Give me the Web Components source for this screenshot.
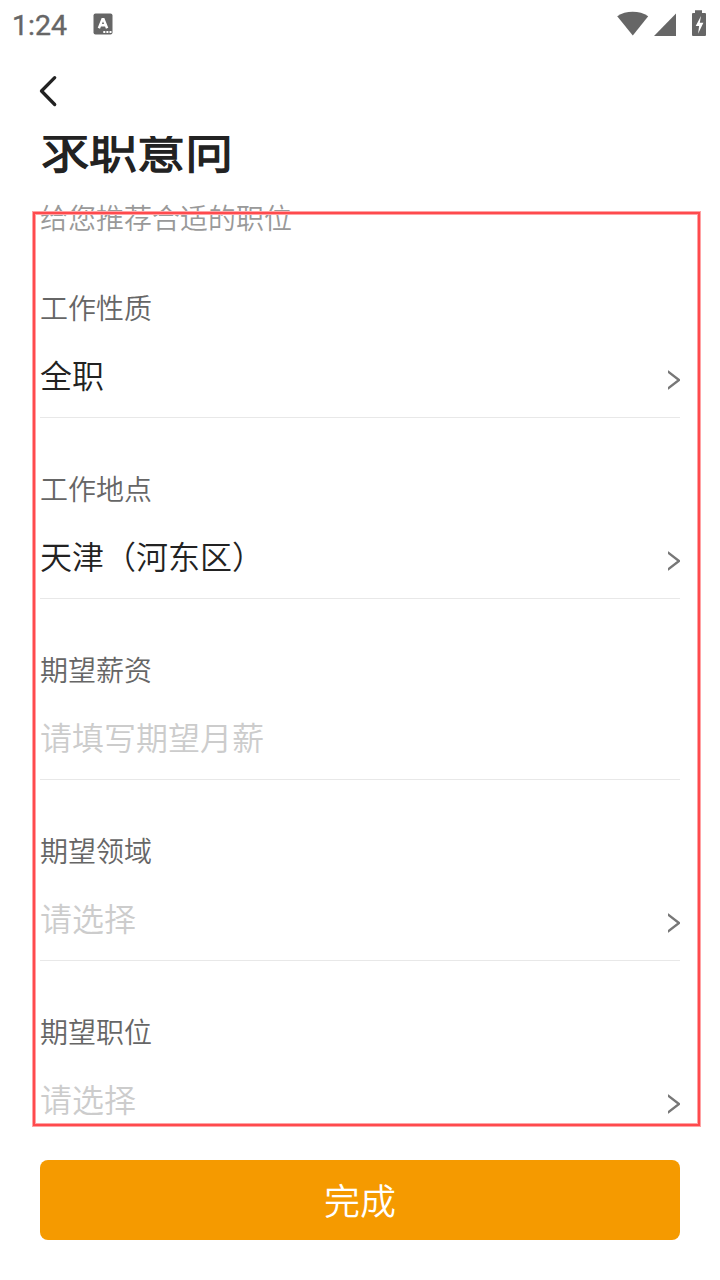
<!DOCTYPE html>
<html lang="zh-CN">
<head>
<meta charset="utf-8">
<title>求职意向</title>
<style>
    body {
        margin: 0;
        background: #fff;
        font-family: "Noto Sans CJK SC", sans-serif;
        font-weight: 350;
    }
</style>
</head>
<body>
<job-intention-page>
    <status-bar slot="status" time="1:24"></status-bar>
    <nav-bar slot="nav"></nav-bar>
    <page-heading heading="求职意向">给您推荐合适的职位</page-heading>
    <form-row label="工作性质" value="全职" arrow></form-row>
    <form-row label="工作地点" value="天津（河东区）" arrow></form-row>
    <form-row label="期望薪资" placeholder="请填写期望月薪"></form-row>
    <form-row label="期望领域" placeholder="请选择" arrow></form-row>
    <form-row label="期望职位" placeholder="请选择" arrow></form-row>
    <submit-button slot="footer">完成</submit-button>
</job-intention-page>

<script>
function attach(element, html) {
    const template = document.createElement("template");
    template.innerHTML = html;
    const root = element.attachShadow({ mode: "open" });
    root.appendChild(template.content.cloneNode(true));
    return root;
}

class JobIntentionPage extends HTMLElement {
    constructor() {
        super();
        attach(this, `
<style>
    :host {
        display: flex;
        flex-direction: column;
        position: relative;
        width: 720px;
        height: 1280px;
        overflow: hidden;
        background: #fff;
    }

    .content {
        height: 1004px;
        padding: 0 40px;
        box-sizing: border-box;
        overflow: hidden;
    }

    footer {
        padding: 20px 40px 40px;
    }

    /* red frame drawn over the form */
    .frame {
        position: absolute;
        left: 32px;
        top: 211px;
        width: 669px;
        height: 916px;
        box-sizing: border-box;
        border: 1px solid #ffa3a5;
        box-shadow: inset 0 0 0 2px #ff4a4d, inset 0 0 0 3px #ffa3a5;
        pointer-events: none;
    }
</style>
<slot name="status"></slot>
<slot name="nav"></slot>
<div class="content"><slot></slot></div>
<footer><slot name="footer"></slot></footer>
<div class="frame"></div>`);
    }
}

class StatusBar extends HTMLElement {
    constructor() {
        super();
        this.$root = attach(this, `
<style>
    :host {
        display: flex;
        align-items: center;
        height: 48px;
        padding: 0 13px 0 12px;
        box-sizing: border-box;
        color: #666;
        font: 400 28.5px/48px Roboto, sans-serif;
        -webkit-text-stroke: 0.4px #666;
    }

    .time {
        width: 81px;
        padding-top: 3px;
    }

    svg {
        display: block;
        fill: #666;
    }

    .icons {
        display: flex;
        margin-left: auto;
    }
</style>
<span class="time"></span>
<svg width="20" height="48" viewBox="0 0 20 48">
    <rect x="0.5" y="13.5" width="19" height="21" rx="2"/>
    <path d="M5.9 28.3 9.5 19.2h1L14.1 28.3M7.2 25.3h5.6" fill="none" stroke="#fff" stroke-width="2.5"/>
    <path d="M10.3 31h2v2h-2zM13.4 31h2v2h-2zM16.5 31h2v2h-2z" fill="#fff"/>
</svg>
<div class="icons">
    <svg width="93" height="48" viewBox="0 0 93 48">
        <path d="M3.2 16.2C11.8 10.3 25.6 10.3 34.2 16.2L18.8 35.6Z"/>
        <path d="M40 36 62 13.5V36Z"/>
        <path d="M81 10.2h7V13h3a1 1 0 0 1 1 1v21a1 1 0 0 1-1 1H79a1 1 0 0 1-1-1V14a1 1 0 0 1 1-1h2Z"/>
        <path d="M87 16 81.7 26h3.4l-1 7.8 5.3-11h-3.6Z" fill="#fff"/>
    </svg>
</div>`);
    }

    connectedCallback() {
        this.$root.querySelector(".time").textContent = this.getAttribute("time");
    }
}

class NavBar extends HTMLElement {
    constructor() {
        super();
        attach(this, `
<style>
    :host {
        display: flex;
        align-items: center;
        height: 88px;
        padding: 0 38px;
        box-sizing: border-box;
    }

    svg {
        margin-bottom: 2px;
    }
</style>
<svg width="22" height="34" viewBox="0 0 22 34" fill="none" stroke="#222" stroke-width="3.3" stroke-linecap="round" stroke-linejoin="round">
    <path d="M16.7 3.7 3.5 17 16.7 30.5"/>
</svg>`);
    }
}

class PageHeading extends HTMLElement {
    constructor() {
        super();
        this.$root = attach(this, `
<style>
    /* the page is scrolled a little, the heading slides under the nav bar */
    :host {
        display: block;
        height: 125px;
        margin-top: -24px;
    }

    h1 {
        margin: 0;
        padding-left: 1px;
        color: #222;
        font-size: 48px;
        font-weight: 350;
        line-height: 70px;
        -webkit-text-stroke: 1.5px #222;
    }

    p {
        margin: 15px 0 0;
        color: #999;
        font-size: 28px;
        line-height: 40px;
    }
</style>
<h1></h1>
<p><slot></slot></p>`);
    }

    connectedCallback() {
        this.$root.querySelector("h1").textContent = this.getAttribute("heading");
    }
}

class FormRow extends HTMLElement {
    constructor() {
        super();
        this.$root = attach(this, `
<style>
    :host {
        display: block;
        height: 181px;
        padding-top: 50px;
        box-sizing: border-box;
        border-bottom: 1px solid #e8e8e8;
    }

    .label {
        color: #666;
        font-size: 28px;
        line-height: 40px;
    }

    .line {
        display: flex;
        align-items: center;
        justify-content: space-between;
        margin-top: 23px;
        color: #222;
        font-size: 32px;
        line-height: 48px;
    }

    .empty {
        color: #ccc;
    }

    svg {
        display: none;
        margin-top: 12px;
    }

    :host([arrow]) svg {
        display: block;
    }
</style>
<div class="label"></div>
<div class="line">
    <span class="value"></span>
    <svg width="12" height="20" viewBox="0 0 12 20" fill="none" stroke="#777" stroke-width="2.4">
        <path d="M-0.5 1.2 11 10 -0.5 18.8"/>
    </svg>
</div>`);
    }

    connectedCallback() {
        const $value = this.$root.querySelector(".value");
        this.$root.querySelector(".label").textContent = this.getAttribute("label");
        $value.textContent = this.getAttribute("value") || this.getAttribute("placeholder");
        $value.classList.toggle("empty", !this.hasAttribute("value"));
    }
}

class SubmitButton extends HTMLElement {
    constructor() {
        super();
        attach(this, `
<style>
    :host {
        display: block;
    }

    button {
        display: block;
        width: 100%;
        height: 80px;
        padding: 0 0 2px;
        border: 0;
        border-radius: 8px;
        background: #f59a00;
        color: #fff;
        font: inherit;
        font-size: 36px;
        line-height: 78px;
    }
</style>
<button type="button"><slot></slot></button>`);
    }
}

customElements.define("job-intention-page", JobIntentionPage);
customElements.define("status-bar", StatusBar);
customElements.define("nav-bar", NavBar);
customElements.define("page-heading", PageHeading);
customElements.define("form-row", FormRow);
customElements.define("submit-button", SubmitButton);
</script>
</body>
</html>
